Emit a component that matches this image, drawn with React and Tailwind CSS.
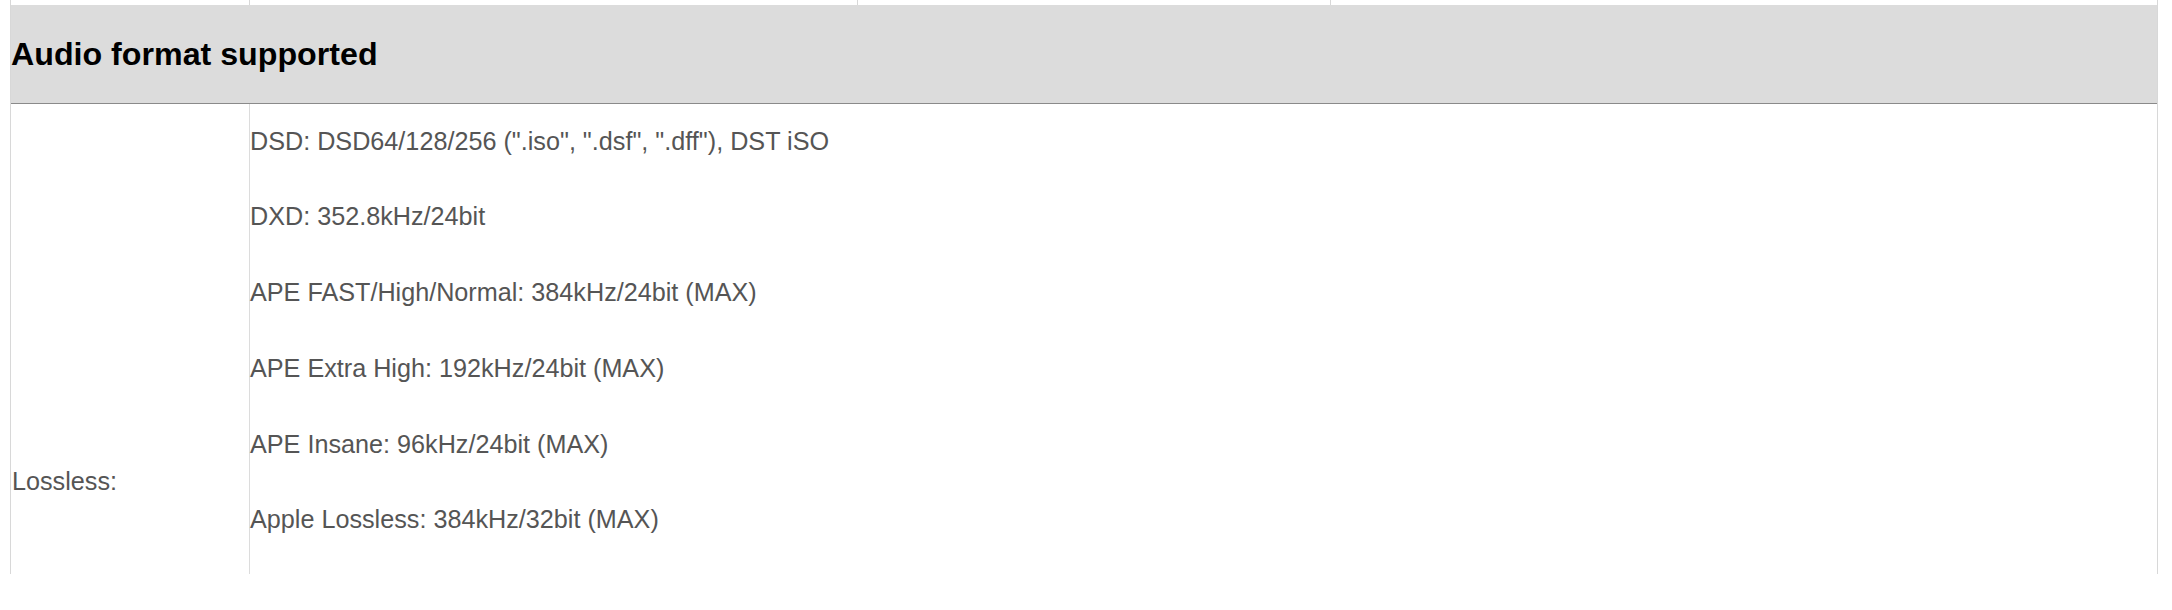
const losslessFormats = [
  'DSD: DSD64/128/256 (".iso", ".dsf", ".dff"), DST iSO',
  'DXD: 352.8kHz/24bit',
  'APE FAST/High/Normal: 384kHz/24bit (MAX)',
  'APE Extra High: 192kHz/24bit (MAX)',
  'APE Insane: 96kHz/24bit (MAX)',
  'Apple Lossless: 384kHz/32bit (MAX)',
];

export default function App() {
  return (
    <div className="w-[2172px] h-[610px] bg-white overflow-hidden font-['Liberation_Sans',Arial,sans-serif]">
      <div className="ml-[10px] w-[2148px] border-l border-r border-[#d8d8d8]">
        {/* tail of the previous row */}
        <div className="flex h-[5px]">
          <div className="w-[239px] border-r border-[#d8d8d8]" />
          <div className="w-[608px] border-r border-[#d8d8d8]" />
          <div className="w-[473px] border-r border-[#d8d8d8]" />
          <div className="flex-1" />
        </div>

        <div className="h-[99px] bg-[#dcdcdc] border-b border-[#8a8a8a] pt-[29px]">
          <h2 className="text-[32.2px] leading-[40px] font-bold text-black">Audio format supported</h2>
        </div>

        <div className="flex h-[470px]">
          <div className="w-[239px] shrink-0 border-r border-[#dcdcdc] pl-[1px] pt-[359px]">
            <p className="text-[25.2px] leading-[37.9px] text-[#555]">Lossless:</p>
          </div>
          <div className="flex-1 pt-[18.5px] flex flex-col gap-[37.9px]">
            {losslessFormats.map((line) => (
              <p key={line} className="text-[25.2px] leading-[37.9px] text-[#555]">{line}</p>
            ))}
          </div>
        </div>
      </div>
    </div>
  );
}
